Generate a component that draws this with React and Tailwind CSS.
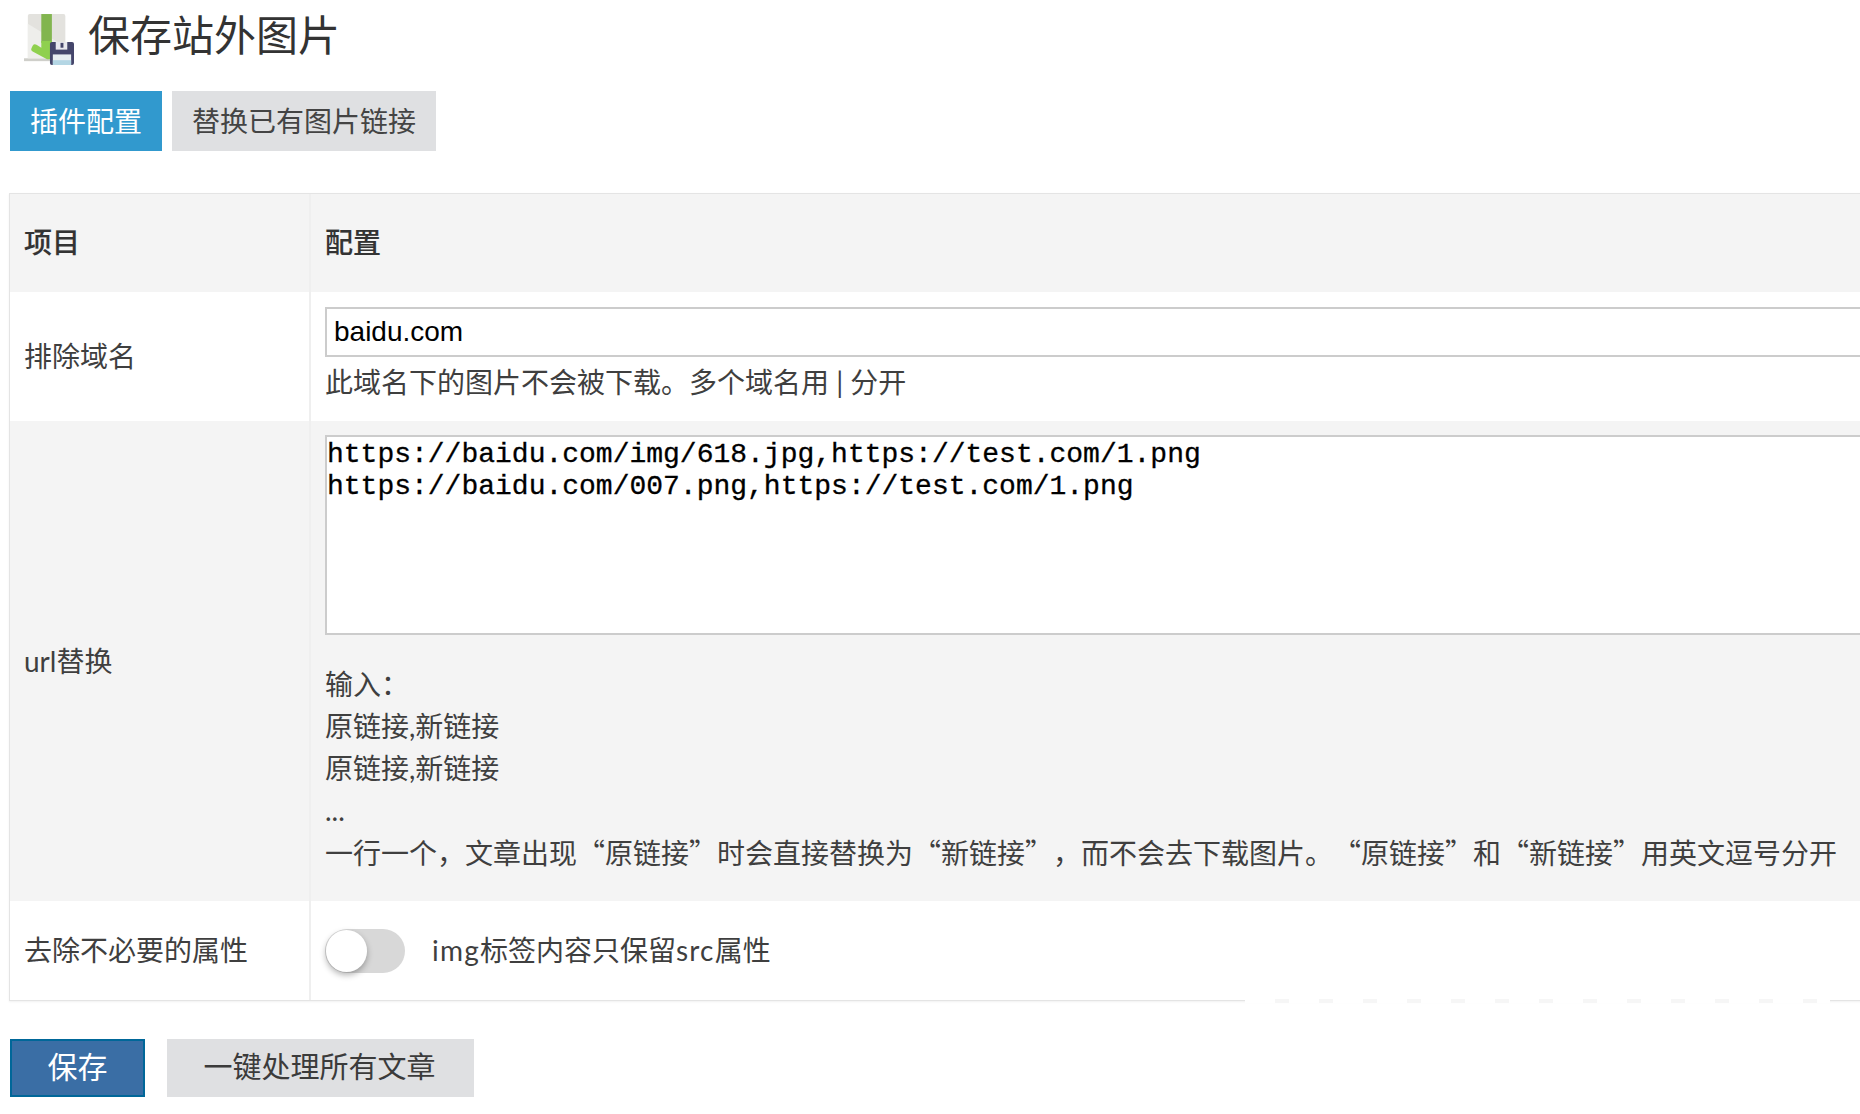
const sans = "font-['Lato','Noto_Sans_CJK_SC',sans-serif]";

function Icon() {
  return (
    <svg width="50" height="52" viewBox="0 0 52 54" className="shrink-0">
      <rect x="0" y="46" width="34" height="3" fill="#cfcfca" />
      <path d="M4 2a2 2 0 0 1 2-2h35a2 2 0 0 1 2 2v44H4z" fill="#e3e2de" />
      <path d="M4 10l39 24v12H4z" fill="#eeeeeb" />
      <rect x="18" y="0" width="11" height="30" fill="#82b54f" />
      <path d="M18 28h11v16a3 3 0 0 1-3 3h-2L9 39a3 3 0 0 1-1-4l1-2a3 3 0 0 1 4-1l5 3z" fill="#8fd04e" />
      <path d="M27 31a2 2 0 0 1 2-2h21a2 2 0 0 1 2 2v20a2 2 0 0 1-2 2H29a2 2 0 0 1-2-2z" fill="#45466b" />
      <rect x="33" y="29" width="12" height="8" fill="#e9e9ee" />
      <rect x="38" y="30" width="3" height="5" fill="#45466b" />
      <rect x="30" y="42" width="19" height="11" fill="#e8eef1" />
      <rect x="30" y="48" width="19" height="5" fill="#b4d6e4" />
    </svg>
  );
}

export default function App() {
  return (
    <div className={`${sans} h-[1114px] w-[1860px] overflow-hidden bg-white pl-[10px] text-[28px] text-[#3f3f3f]`}>
      <div className="flex h-[91px] items-start pl-[14px] pt-[14px]">
        <Icon />
        <h1 className="ml-[14px] mt-[-9px] text-[42px] leading-[60px] font-normal text-[#333]">保存站外图片</h1>
      </div>

      <div className="flex gap-[10px]">
        <button className="h-[60px] w-[152px] bg-[#3199ce] text-white">插件配置</button>
        <button className="h-[60px] w-[264px] bg-[#dfe0e2] text-[#444]">替换已有图片链接</button>
      </div>

      <div className="relative ml-[-1px] mt-[42px] w-[1880px]">
        <table className="w-full table-fixed border-separate border-spacing-0 border border-[#e4e4e4] shadow-[0_1px_2px_rgba(0,0,0,0.06)]">
          <colgroup>
            <col className="w-[301px]" />
            <col />
          </colgroup>
          <tbody>
            <tr className="h-[98px] bg-[#f4f4f4]">
              <th className="border-r-2 border-[#efefef] pb-[2px] pl-[14px] text-left font-medium text-[#333] [-webkit-text-stroke:0.15px]">项目</th>
              <th className="pb-[2px] pl-[14px] text-left font-medium text-[#333] [-webkit-text-stroke:0.15px]">配置</th>
            </tr>
            <tr className="h-[129px] bg-white">
              <td className="border-r-2 border-[#efefef] pb-[2px] pl-[14px]">排除域名</td>
              <td className="pl-[14px] align-top">
                <input
                  readOnly
                  value="baidu.com"
                  className="mt-[15px] block h-[50px] w-[1600px] border-2 border-[#cccccc] bg-white px-[7px] font-['Liberation_Sans',sans-serif] text-[28px] text-black outline-none"
                />
                <p className="mt-[4px] leading-[42px]">此域名下的图片不会被下载。多个域名用 | 分开</p>
              </td>
            </tr>
            <tr className="h-[480px] bg-[#f4f4f4]">
              <td className="border-r-2 border-[#efefef] pl-[14px]">url替换</td>
              <td className="pl-[14px] align-top">
                <textarea
                  readOnly
                  value={"https://baidu.com/img/618.jpg,https://test.com/1.png\nhttps://baidu.com/007.png,https://test.com/1.png"}
                  className="mt-[14px] block h-[200px] w-[1600px] resize-none overflow-hidden border-2 border-[#cccccc] bg-white px-0 pb-0 pt-[2px] font-['Liberation_Mono',monospace] text-[28px] leading-[32px] text-black outline-none [-webkit-text-stroke:0.3px]"
                />
                <div className="mt-[28px] leading-[42px]">
                  <p>输入：</p>
                  <p>原链接,新链接</p>
                  <p>原链接,新链接</p>
                  <p>...</p>
                  <p className="font-['Noto_Sans_CJK_SC',sans-serif] [text-spacing-trim:space-all]">一行一个，文章出现“原链接”时会直接替换为“新链接”，而不会去下载图片。“原链接”和“新链接”用英文逗号分开</p>
                </div>
              </td>
            </tr>
            <tr className="h-[99px] bg-white">
              <td className="border-r-2 border-[#efefef] pb-[2px] pl-[14px]">去除不必要的属性</td>
              <td className="pl-[14px]">
                <div className="flex items-center">
                  <span className="relative h-[44px] w-[80px] rounded-full bg-[#d8d8d8]">
                    <span className="absolute left-[1px] top-[1px] h-[42px] w-[41px] rounded-full bg-white shadow-[0_3px_6px_rgba(0,0,0,0.3)]" />
                  </span>
                  <span className="ml-[27px] mt-[-2px]"><span className="tracking-[1.2px]">img</span>标签内容只保留<span className="tracking-[1.2px]">src</span>属性</span>
                </div>
              </td>
            </tr>
          </tbody>
        </table>
        <div className="absolute bottom-[-2px] left-[1236px] h-[4px] w-[585px] bg-[repeating-linear-gradient(90deg,#fff_0,#fff_30px,#f6f6f6_30px,#f6f6f6_44px)]" />
      </div>

      <div className="mt-[38px] flex gap-[22px]">
        <button className="h-[58px] w-[135px] border-2 border-[#006799] bg-[#3a6ea5] pb-[4px] text-[30px] text-white">保存</button>
        <button className="h-[58px] w-[307px] bg-[#dfe0e2] pb-[3px] pr-[2px] text-[29px] text-[#3b3b3b]">一键处理所有文章</button>
      </div>
    </div>
  );
}
